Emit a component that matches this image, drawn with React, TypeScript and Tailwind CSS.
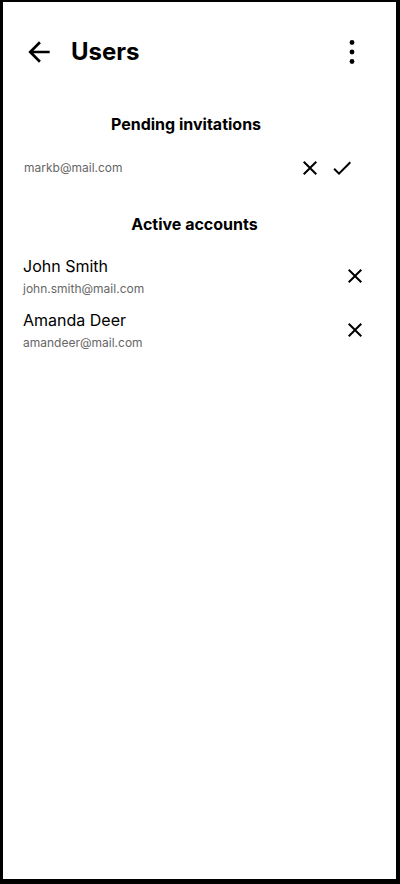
import React from "react";

const Close = ({ size = 24 }: { size?: number }) => (
  <svg width={size} height={size} viewBox="0 0 24 24" fill="currentColor">
    <path d="M19 6.41 17.59 5 12 10.59 6.41 5 5 6.41 10.59 12 5 17.59 6.41 19 12 13.41 17.59 19 19 17.59 13.41 12z" />
  </svg>
);

const Check = () => (
  <svg width={24} height={24} viewBox="0 0 24 24" fill="currentColor">
    <path d="M9 16.17 4.83 12l-1.42 1.41L9 19 21 7l-1.41-1.41z" />
  </svg>
);

export default function App() {
  return (
    <div
      className="h-[884px] w-[400px] bg-white border-black border-l-[3px] border-t-[2px] border-r-[4px] border-b-[5px] text-black"
      style={{ fontFamily: "Inter, 'Noto Sans', sans-serif" }}
    >
      <div className="flex items-center h-[52px] mt-[24px] pl-[20px] pr-[32px]">
        <svg width={32} height={32} viewBox="0 0 24 24" fill="currentColor">
          <path d="M20 11H7.83l5.59-5.59L12 4l-8 8 8 8 1.41-1.41L7.83 13H20v-2z" />
        </svg>
        <div className="ml-[16px] text-[24px] font-bold leading-none">Users</div>
        <div className="ml-auto">
          <svg width={24} height={32} viewBox="0 0 24 32" fill="currentColor">
            <circle cx="12" cy="6.5" r="2.4" />
            <circle cx="12" cy="16" r="2.4" />
            <circle cx="12" cy="25.5" r="2.4" />
          </svg>
        </div>
      </div>

      <div className="mt-[36px] pr-[27px] text-center text-[16px] font-bold leading-[20px]">Pending invitations</div>
      <div className="flex items-center mt-[20px] pl-[21px] pr-[42px] h-[28px]">
        <div className="text-[12px] text-[#666]">markb@mail.com</div>
        <div className="ml-auto flex items-center gap-[8px] text-black">
          <Close />
          <Check />
        </div>
      </div>

      <div className="mt-[32px] pr-[10px] text-center text-[16px] font-bold leading-[20px]">Active accounts</div>
      <div className="mt-[14px] flex flex-col">
        {[
          ["John Smith", "john.smith@mail.com"],
          ["Amanda Deer", "amandeer@mail.com"],
        ].map(([n, e]) => (
          <div key={n} className="flex items-center h-[54px] pl-[20px] pr-[29px]">
            <div className="flex flex-col">
              <div className="text-[16px] leading-[24px]">{n}</div>
              <div className="mt-[3px] text-[12px] leading-[16px] text-[#666]">{e}</div>
            </div>
            <div className="ml-auto mt-[2px]">
              <Close />
            </div>
          </div>
        ))}
      </div>
    </div>
  );
}
